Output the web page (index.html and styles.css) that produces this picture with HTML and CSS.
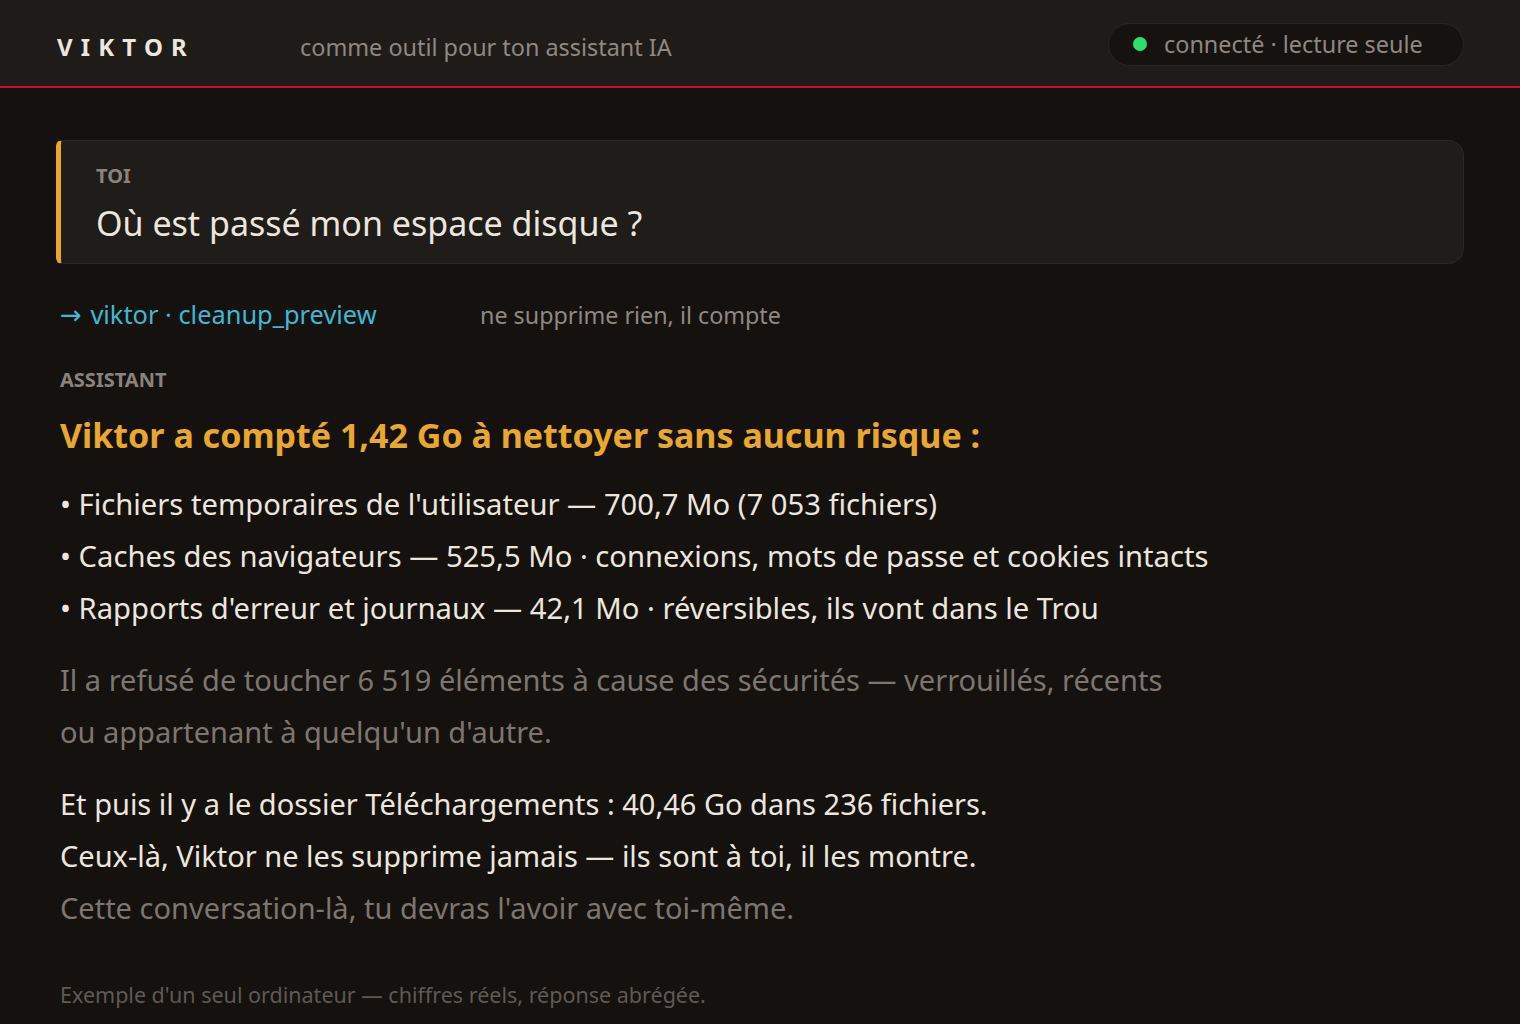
FILE: index.html
```html
<!DOCTYPE html>
<html lang="fr">
<head>
<meta charset="utf-8">
<link rel="stylesheet" href="styles.css">
</head>
<body>
<header class="topbar">
  <div class="brand">VIKTOR</div>
  <div class="tagline">comme outil pour ton assistant IA</div>
  <div class="status"><span class="dot"></span><span>connecté · lecture seule</span></div>
</header>
<main class="content">
  <section class="user-card">
    <div class="label">TOI</div>
    <div class="question">Où est passé mon espace disque ?</div>
  </section>
  <div class="tool-line">
    <span class="tool"><span class="arrow">→</span> viktor · cleanup_preview</span>
    <span class="tool-note">ne supprime rien, il compte</span>
  </div>
  <div class="label assistant-label">ASSISTANT</div>
  <h1 class="headline">Viktor a compté 1,42 Go à nettoyer sans aucun risque :</h1>
  <ul class="items">
    <li>• Fichiers temporaires de l'utilisateur — 700,7 Mo (7 053 fichiers)</li>
    <li>• Caches des navigateurs — 525,5 Mo · connexions, mots de passe et cookies intacts</li>
    <li>• Rapports d'erreur et journaux — 42,1 Mo · réversibles, ils vont dans le Trou</li>
  </ul>
  <p class="muted para">Il a refusé de toucher 6 519 éléments à cause des sécurités — verrouillés, récents<br>ou appartenant à quelqu'un d'autre.</p>
  <p class="para bright">Et puis il y a le dossier Téléchargements : 40,46 Go dans 236 fichiers.<br>Ceux-là, Viktor ne les supprime jamais — ils sont à toi, il les montre.<br><span class="muted">Cette conversation-là, tu devras l'avoir avec toi-même.</span></p>
  <p class="footnote">Exemple d'un seul ordinateur — chiffres réels, réponse abrégée.</p>
</main>
</body>
</html>
```
FILE: styles.css
```css
* { box-sizing: border-box; }
html, body { margin: 0; padding: 0; }
body {
  background: #15110f;
  font-family: "Noto Sans", "Open Sans", sans-serif;
  color: #ece6df;
  width: 1520px;
  height: 1024px;
  overflow: hidden;
}
.topbar {
  height: 88px;
  background: #1f1b18;
  border-bottom: 2px solid #c8102e;
  display: flex;
  align-items: center;
  padding: 7px 56px 0 57px;
}
.brand {
  font-weight: 700;
  font-size: 24px;
  letter-spacing: 0.34em;
  color: #ece6df;
  width: 243px;
}
.tagline {
  font-size: 23.4px;
  color: #8f8882;
  flex: 1;
}
.status {
  display: flex;
  align-items: center;
  gap: 17px;
  height: 43px;
  padding: 0 40px 0 24px;
  border: 1px solid #2a2623;
  border-radius: 22px;
  background: #161210;
  font-size: 23.4px;
  color: #8f8882;
  margin-top: -5px;
  width: 356px;
}
.dot {
  width: 14px;
  height: 14px;
  border-radius: 50%;
  background: #2ee06a;
}
.content {
  padding: 52px 56px 0 60px;
}
.user-card {
  margin-left: -4px;
  background: #1f1c19;
  border: 1px solid #2c2825;
  border-left: 5px solid #e8a72e;
  border-radius: 6px 16px 16px 6px;
  padding: 22px 30px 0 35px;
  height: 124px;
}
.label {
  font-size: 20px;
  line-height: 26px;
  font-weight: 700;
  color: #8a837d;
}
.question {
  font-size: 34px;
  line-height: 46px;
  color: #ece6df;
  margin-top: 11px;
}
.tool-line {
  display: flex;
  margin-top: 33px;
  align-items: baseline;
  line-height: 34px;
}
.tool {
  font-size: 25.4px;
  color: #3fb8d0;
  width: 420px;
}
.arrow {
  font-family: "DejaVu Sans", sans-serif;
  font-size: 26px;
  margin-right: 2px;
}
.tool-note {
  font-size: 23.3px;
  color: #8f8882;
}
.assistant-label {
  margin-top: 35px;
}
.headline {
  margin: 19px 0 0;
  font-size: 34px;
  line-height: 46px;
  font-weight: 700;
  color: #e8a72e;
}
.items {
  list-style: none;
  margin: 20px 0 0;
  padding: 0;
  font-size: 29.2px;
  line-height: 52px;
  color: #ece6df;
}
.para {
  margin: 0;
  font-size: 29px;
  line-height: 52px;
}
.muted { color: #7d7670; }
.items + .para { margin-top: 20px; }
.para + .para { margin-top: 20px; }
.bright { color: #ece6df; }
.footnote {
  margin: 47px 0 0;
  font-size: 21.5px;
  line-height: 28px;
  color: #5f5954;
}
```
